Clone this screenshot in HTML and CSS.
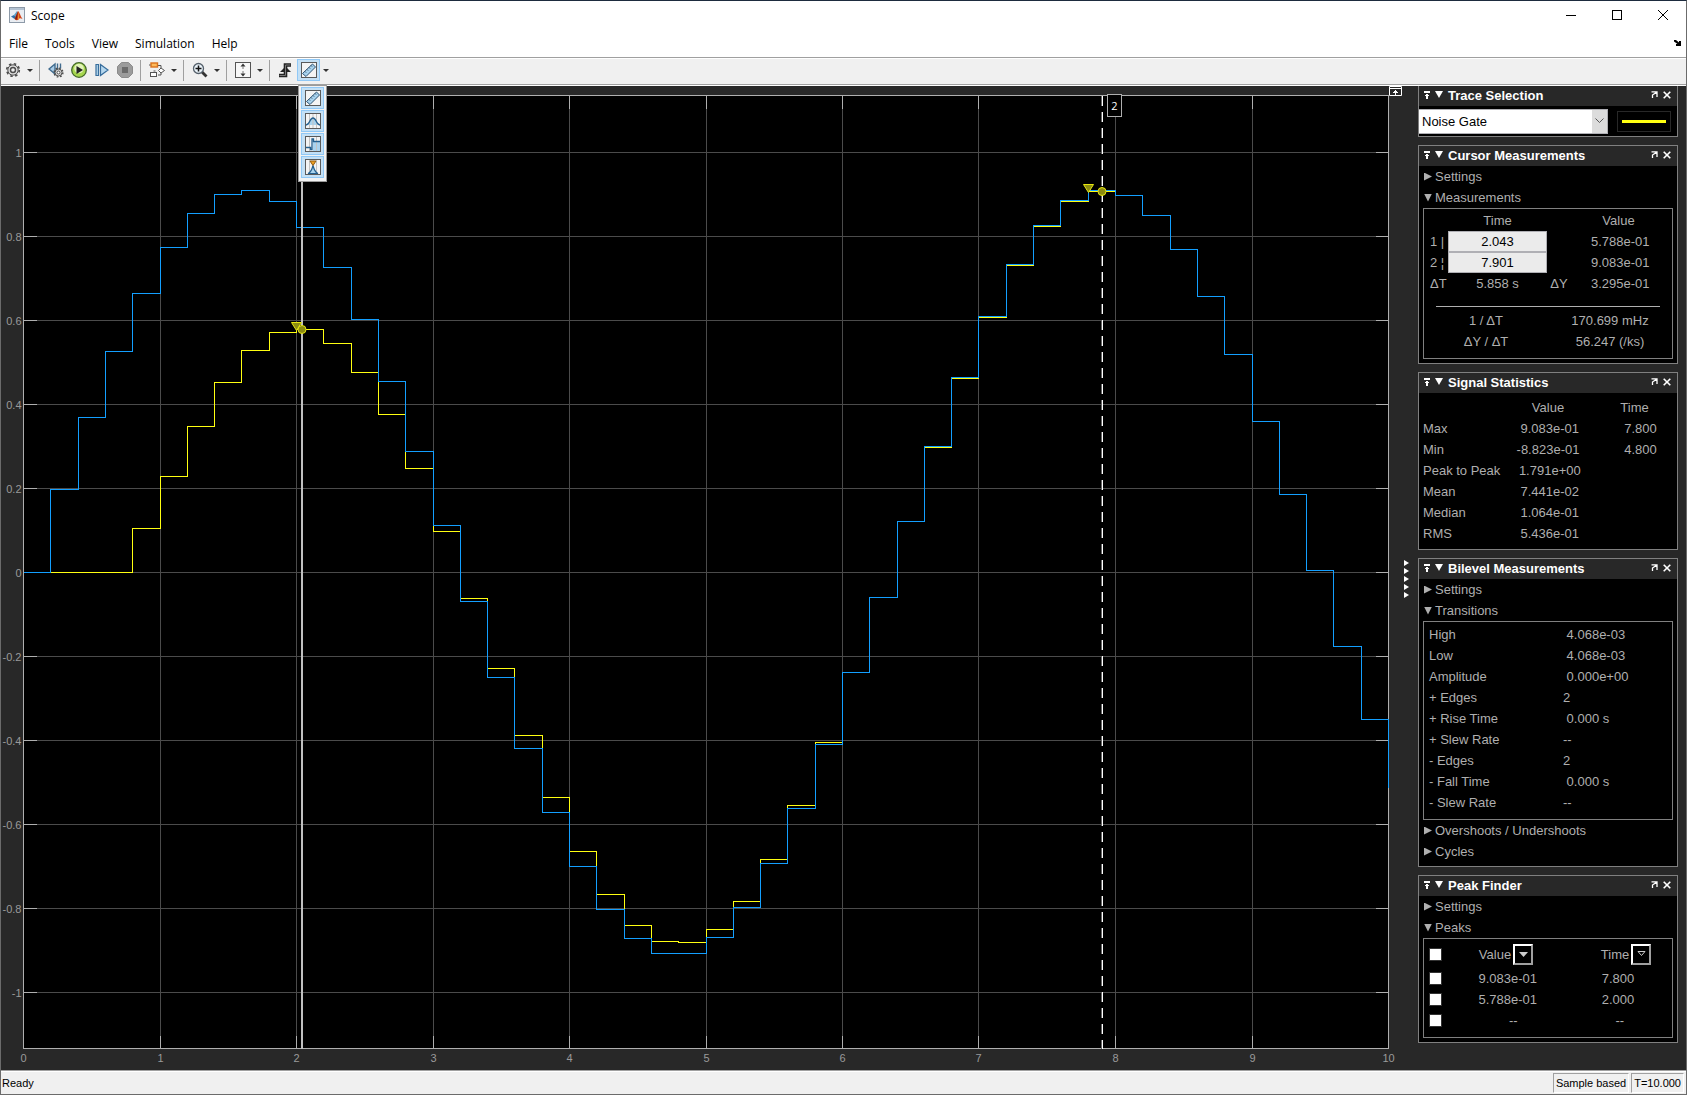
FILE: index.html
```html
<!DOCTYPE html>
<html lang="en">
<head>
    <meta charset="UTF-8">
    <meta name="viewport" content="width=device-width, initial-scale=1.0">
    <title>Scope</title>
    <link rel="stylesheet" href="styles.css">
</head>
<body>
    <!-- shared icons -->
    <svg class="sprite" width="0" height="0">
        <symbol id="pin" viewBox="0 0 6 8"><path d="M0 0h6v2H0zM2 4h2v4H2zM1 4h4v1H1zM2 3h2v1H2z"/></symbol>
        <symbol id="undock" viewBox="0 0 7 7"><path d="M0.500 0.800h5.500v5.200M5.500 1.300L1.500 4v3" fill="none" stroke="currentColor" stroke-width="1.300"/></symbol>
        <symbol id="cross" viewBox="0 0 8 8"><path d="M0.7 0.7l6.600 6.600M7.300 0.7l-6.600 6.600" fill="none" stroke="currentColor" stroke-width="1.600"/></symbol>
        <symbol id="ruler" viewBox="0 0 16 16">
            <rect x="0.5" y="0.5" width="15" height="15" fill="#f4f4f4" stroke="#5a5a5a"/>
            <path d="M1.500 11.500L11.500 2l3 3L5 14.500z" fill="#a9d3ee" stroke="#2c5273"/>
            <path d="M4 9.500l1 1M6 7.500l1 1M8 5.500l1 1M10 3.500l1 1" stroke="#20394f"/>
        </symbol>
    </svg>

    <div class="window">
        <header class="titlebar">
            <svg class="logo" width="16" height="16" viewBox="0 0 16 16">
                <rect x="0.5" y="0.5" width="15" height="15" fill="#e9edf2" stroke="#8d9aa8"/>
                <path d="M1 1h14v2H1z" fill="#b4c3d3"/>
                <path d="M2 9.500l3-1.500 2.500 2-2 2z" fill="#2e6fa8"/>
                <path d="M5 8l3-4 1 3-1.500 3z" fill="#5aa0c8"/>
                <path d="M5.500 12L9 4c1.500 1 2.500 5 4.500 8-2-1-3-1-4 .5-1 1-2.500 1-4-.5z" fill="#d4461c"/>
                <path d="M9 4c-.5 3-.5 6-1.500 9L6 12z" fill="#7d1e12"/>
                <path d="M9 5c1 2 .5 5 1.200 6.500L9 13z" fill="#f2a032"/>
            </svg>
            <h1>Scope</h1>
            <div class="window-buttons">
                <button type="button" aria-label="Minimize"><svg width="10" height="10"><path d="M0 5.500h10" stroke="#000"/></svg></button>
                <button type="button" aria-label="Maximize"><svg width="10" height="10"><rect x="0.5" y="0.5" width="9" height="9" fill="none" stroke="#000"/></svg></button>
                <button type="button" aria-label="Close"><svg width="10" height="10"><path d="M0 0l10 10M10 0L0 10" stroke="#000"/></svg></button>
            </div>
        </header>

        <nav class="menubar">
            <button type="button">File</button>
            <button type="button">Tools</button>
            <button type="button">View</button>
            <button type="button">Simulation</button>
            <button type="button">Help</button>
            <button type="button" class="dock" aria-label="Dock"><svg width="7" height="6" viewBox="0 0 7 6"><path d="M0 0h2l3 2.500V1h2v5H2V4h1.500L0 1.500z"/></svg></button>
        </nav>

        <div class="toolbar">
            <button type="button" class="tool" aria-label="Configuration">
                <svg width="16" height="16" viewBox="0 0 16 16">
                    <circle cx="8" cy="8" r="6.300" fill="none" stroke="#4c4c4c" stroke-width="1.600" stroke-dasharray="2.500 2.450"/>
                    <circle cx="8" cy="8" r="5.200" fill="#dcdcdc" stroke="#4c4c4c"/>
                    <circle cx="8" cy="8" r="2.500" fill="#f0f0f0" stroke="#4c4c4c" stroke-width="1.400"/>
                </svg>
            </button>
            <button type="button" class="more" aria-label="More configuration"></button>
            <span class="sep"></span>
            <button type="button" class="tool" aria-label="Step back">
                <svg width="16" height="16" viewBox="0 0 16 16">
                    <path d="M1 7l6-5v10zM9.500 1.500v6M12.500 1.500v5" fill="#a8cbe6" stroke="#3f6b8f" stroke-width="1.400"/>
                    <circle cx="10.500" cy="10.500" r="4.400" fill="none" stroke="#4c4c4c" stroke-width="1.400" stroke-dasharray="1.700 1.750"/>
                    <circle cx="10.500" cy="10.500" r="3.500" fill="#e0e0e0" stroke="#4c4c4c"/>
                    <circle cx="10.500" cy="10.500" r="1.500" fill="#fff" stroke="#4c4c4c"/>
                </svg>
            </button>
            <button type="button" class="tool" aria-label="Run">
                <svg width="16" height="16" viewBox="0 0 16 16">
                    <circle cx="8" cy="8" r="7.300" fill="#a6d64e" stroke="#44682a" stroke-width="1.300"/>
                    <circle cx="8" cy="6.500" r="4.800" fill="#e1f3b8"/>
                    <path d="M5.500 4v8L12 8z" fill="#222"/>
                </svg>
            </button>
            <button type="button" class="tool" aria-label="Step forward">
                <svg width="16" height="16" viewBox="0 0 16 16">
                    <path d="M2 2.500h2.500v11H2zM6.500 2.500L14 8l-7.500 5.500z" fill="#b5d7ee" stroke="#376d9c" stroke-width="1.200"/>
                </svg>
            </button>
            <button type="button" class="tool" aria-label="Stop">
                <svg width="16" height="16" viewBox="0 0 16 16">
                    <path d="M4.500 0.500h7l4 4v7l-4 4h-7l-4-4v-7z" fill="#9b9b9b" stroke="#8b8b8b"/>
                    <rect x="5" y="5" width="6" height="6" fill="#6a6a6a"/>
                </svg>
            </button>
            <span class="sep"></span>
            <button type="button" class="tool" aria-label="Highlight block">
                <svg width="16" height="16" viewBox="0 0 16 16">
                    <path d="M9 3.500h3v3M9 13h3v-2.500M4.500 9h2" fill="none" stroke="#555"/>
                    <rect x="2" y="1" width="6.500" height="4" fill="#fdba5b" stroke="#d9711c" stroke-width="1.400"/>
                    <path d="M0 3h1.500" stroke="#555"/>
                    <path d="M9.500 8.500L12 6l3.500 2.500L12 11z" fill="#fff" stroke="#555"/>
                    <rect x="1.500" y="10.500" width="6" height="4" fill="#fff" stroke="#555"/>
                </svg>
            </button>
            <button type="button" class="more" aria-label="More blocks"></button>
            <span class="sep"></span>
            <button type="button" class="tool" aria-label="Zoom in">
                <svg width="16" height="16" viewBox="0 0 16 16">
                    <path d="M10 10l4.500 4.500" stroke="#333" stroke-width="2.800"/>
                    <circle cx="6.500" cy="6.500" r="5" fill="#e9f2f8" stroke="#55606b" stroke-width="1.300"/>
                    <path d="M6.500 3.500v6M3.500 6.500h6" stroke="#111" stroke-width="1.500"/>
                </svg>
            </button>
            <button type="button" class="more" aria-label="More zoom"></button>
            <span class="sep"></span>
            <button type="button" class="tool" aria-label="Scale axes">
                <svg width="16" height="16" viewBox="0 0 16 16">
                    <rect x="0.5" y="0.5" width="15" height="15" fill="#f7f7f7" stroke="#555"/>
                    <path d="M8 1.500L10.500 4.500H5.500zM8 14.500L10.500 11.500H5.500z" fill="#333"/>
                    <path d="M8 4v3M8 9v3" stroke="#777"/>
                </svg>
            </button>
            <button type="button" class="more" aria-label="More scaling"></button>
            <span class="sep"></span>
            <button type="button" class="tool" aria-label="Triggers">
                <svg width="16" height="16" viewBox="0 0 16 16">
                    <path d="M1 13.500h6.500V3H13" fill="none" stroke="#222" stroke-width="3.600"/>
                    <path d="M2 10L7.500 4.500l5.500 5.500z" fill="#222"/>
                    <path d="M1.500 13.500h6V3H12.500" fill="none" stroke="#777"/>
                </svg>
            </button>
            <div class="measure">
                <button type="button" class="tool active" aria-label="Cursor measurements"><svg width="16" height="16"><use href="#ruler"/></svg></button>
                <div class="measure-menu">
                    <button type="button" aria-label="Cursor measurements"><svg width="16" height="16"><use href="#ruler"/></svg></button>
                    <button type="button" aria-label="Signal statistics">
                        <svg width="16" height="16" viewBox="0 0 16 16">
                            <rect x="0.5" y="0.5" width="15" height="15" fill="#f4f4f4" stroke="#5a5a5a"/>
                            <path d="M1 12c4 0 3.500-7 7-7s3 7 7 7z" fill="#a9d3ee"/>
                            <path d="M4.500 1v14M11.500 1v14M8 1v14" stroke="#c3c3c3"/>
                            <path d="M1 12c4 0 3.500-7 7-7s3 7 7 7" fill="none" stroke="#24608f" stroke-width="1.300"/>
                        </svg>
                    </button>
                    <button type="button" aria-label="Bilevel measurements">
                        <svg width="16" height="16" viewBox="0 0 16 16">
                            <rect x="0.5" y="0.5" width="15" height="15" fill="#f4f4f4" stroke="#5a5a5a"/>
                            <path d="M8 5h7v10H8z" fill="#a9d3ee"/>
                            <path d="M4.500 1v14M11.500 1v14" stroke="#c3c3c3"/>
                            <path d="M1 11.500h4.500v2h1.500V3h1.500v2.500H15" fill="none" stroke="#24608f" stroke-width="1.300"/>
                        </svg>
                    </button>
                    <button type="button" aria-label="Peak finder">
                        <svg width="16" height="16" viewBox="0 0 16 16">
                            <rect x="0.5" y="0.5" width="15" height="15" fill="#f4f4f4" stroke="#5a5a5a"/>
                            <path d="M4.500 1v14M11.500 1v14" stroke="#c3c3c3"/>
                            <path d="M3 14.500c3-1 4-4 5-8 1 4 2 7 5 8z" fill="#a9d3ee" stroke="#24608f" stroke-width="1.200"/>
                            <path d="M5 2h6L8 6.500z" fill="#f0a020" stroke="#8f5a10"/>
                        </svg>
                    </button>
                </div>
            </div>
            <button type="button" class="more" aria-label="More measurements"></button>
        </div>

        <main class="content">
            <section class="display">
                <svg id="plot" class="plot" role="img" aria-label="Noise Gate signal"></svg>
                <button type="button" class="expand" aria-label="Maximize axes"><svg width="13" height="10" viewBox="0 0 13 10"><path d="M0.500 0.500h12v9H0.500zM1 2.500h11" fill="none" stroke="#fff"/><path d="M6 4h1v1h1v1h1v1H7v2H6V7H4V6h1V5h1z" fill="#fff"/></svg></button>
            </section>

            <button type="button" class="splitter" aria-label="Hide panels">
                <i></i><i></i><i></i><i></i><i></i>
            </button>

            <aside class="panels">
                <section class="panel first">
                    <h2 class="panel-head">
                        <button type="button" aria-label="Pin"><svg width="6" height="8"><use href="#pin"/></svg></button>
                        <button type="button" class="fold" aria-label="Collapse"></button>
                        <span>Trace Selection</span>
                        <button type="button" aria-label="Undock"><svg width="7" height="7"><use href="#undock"/></svg></button>
                        <button type="button" aria-label="Close"><svg width="8" height="8"><use href="#cross"/></svg></button>
                    </h2>
                    <div class="trace">
                        <div class="trace-select">
                            <select aria-label="Trace">
                                <option>Noise Gate</option>
                            </select>
                            <span><svg width="9" height="6" viewBox="0 0 9 6"><path d="M0.500 0.500l4 4 4-4" fill="none" stroke="#555"/></svg></span>
                        </div>
                        <div class="trace-line"></div>
                    </div>
                </section>

                <section class="panel">
                    <h2 class="panel-head">
                        <button type="button" aria-label="Pin"><svg width="6" height="8"><use href="#pin"/></svg></button>
                        <button type="button" class="fold" aria-label="Collapse"></button>
                        <span>Cursor Measurements</span>
                        <button type="button" aria-label="Undock"><svg width="7" height="7"><use href="#undock"/></svg></button>
                        <button type="button" aria-label="Close"><svg width="8" height="8"><use href="#cross"/></svg></button>
                    </h2>
                    <details><summary>Settings</summary></details>
                    <details open class="last">
                        <summary>Measurements</summary>
                        <div class="box">
                            <table class="cursors">
                                <tr><th></th><th>Time</th><th></th><th>Value</th></tr>
                                <tr><td><label for="cursor1">1 |</label></td><td><input type="text" id="cursor1" value="2.043"></td><td></td><td>&nbsp;5.788e-01</td></tr>
                                <tr><td><label for="cursor2">2 ¦</label></td><td><input type="text" id="cursor2" value="7.901"></td><td></td><td>&nbsp;9.083e-01</td></tr>
                                <tr><td>ΔT</td><td>5.858 s</td><td>ΔY</td><td>&nbsp;3.295e-01</td></tr>
                            </table>
                            <hr>
                            <table class="rates">
                                <tr><td>1 / ΔT</td><td>170.699 mHz</td></tr>
                                <tr><td>ΔY / ΔT</td><td>56.247 (/ks)</td></tr>
                            </table>
                        </div>
                    </details>
                </section>

                <section class="panel">
                    <h2 class="panel-head">
                        <button type="button" aria-label="Pin"><svg width="6" height="8"><use href="#pin"/></svg></button>
                        <button type="button" class="fold" aria-label="Collapse"></button>
                        <span>Signal Statistics</span>
                        <button type="button" aria-label="Undock"><svg width="7" height="7"><use href="#undock"/></svg></button>
                        <button type="button" aria-label="Close"><svg width="8" height="8"><use href="#cross"/></svg></button>
                    </h2>
                    <table class="stats">
                        <tr><th></th><th>Value</th><th>Time</th></tr>
                        <tr><td>Max</td><td>&nbsp;9.083e-01</td><td>7.800</td></tr>
                        <tr><td>Min</td><td>-8.823e-01</td><td>4.800</td></tr>
                        <tr><td>Peak to Peak</td><td>&nbsp;1.791e+00</td><td></td></tr>
                        <tr><td>Mean</td><td>&nbsp;7.441e-02</td><td></td></tr>
                        <tr><td>Median</td><td>&nbsp;1.064e-01</td><td></td></tr>
                        <tr><td>RMS</td><td>&nbsp;5.436e-01</td><td></td></tr>
                    </table>
                </section>

                <section class="panel">
                    <h2 class="panel-head">
                        <button type="button" aria-label="Pin"><svg width="6" height="8"><use href="#pin"/></svg></button>
                        <button type="button" class="fold" aria-label="Collapse"></button>
                        <span>Bilevel Measurements</span>
                        <button type="button" aria-label="Undock"><svg width="7" height="7"><use href="#undock"/></svg></button>
                        <button type="button" aria-label="Close"><svg width="8" height="8"><use href="#cross"/></svg></button>
                    </h2>
                    <details><summary>Settings</summary></details>
                    <details open>
                        <summary>Transitions</summary>
                        <div class="box list">
                            <table class="transitions">
                                <tr><td>High</td><td>&nbsp;4.068e-03</td></tr>
                                <tr><td>Low</td><td>&nbsp;4.068e-03</td></tr>
                                <tr><td>Amplitude</td><td>&nbsp;0.000e+00</td></tr>
                                <tr><td>+ Edges</td><td>2</td></tr>
                                <tr><td>+ Rise Time</td><td>&nbsp;0.000 s</td></tr>
                                <tr><td>+ Slew Rate</td><td>--</td></tr>
                                <tr><td>- Edges</td><td>2</td></tr>
                                <tr><td>- Fall Time</td><td>&nbsp;0.000 s</td></tr>
                                <tr><td>- Slew Rate</td><td>--</td></tr>
                            </table>
                        </div>
                    </details>
                    <details><summary>Overshoots / Undershoots</summary></details>
                    <details class="last"><summary>Cycles</summary></details>
                </section>

                <section class="panel">
                    <h2 class="panel-head">
                        <button type="button" aria-label="Pin"><svg width="6" height="8"><use href="#pin"/></svg></button>
                        <button type="button" class="fold" aria-label="Collapse"></button>
                        <span>Peak Finder</span>
                        <button type="button" aria-label="Undock"><svg width="7" height="7"><use href="#undock"/></svg></button>
                        <button type="button" aria-label="Close"><svg width="8" height="8"><use href="#cross"/></svg></button>
                    </h2>
                    <details><summary>Settings</summary></details>
                    <details open class="last">
                        <summary>Peaks</summary>
                        <div class="box">
                            <table class="peaks">
                                <tr>
                                    <th><input type="checkbox" aria-label="All peaks"></th>
                                    <th><div class="sort">Value<button type="button" aria-label="Sort by value"><svg width="9" height="5"><path d="M0 0h9L4.500 5z" fill="#ccc"/></svg></button></div></th>
                                    <th><div class="sort">Time<button type="button" aria-label="Sort by time"><svg width="9" height="6"><path d="M1 0.500h7L4.500 4.500z" fill="none" stroke="#ccc"/></svg></button></div></th>
                                </tr>
                                <tr><td><input type="checkbox" aria-label="Peak 1"></td><td>&nbsp;9.083e-01</td><td>7.800</td></tr>
                                <tr><td><input type="checkbox" aria-label="Peak 2"></td><td>&nbsp;5.788e-01</td><td>2.000</td></tr>
                                <tr><td><input type="checkbox" aria-label="Peak 3"></td><td>&nbsp;&nbsp;&nbsp;&nbsp;--</td><td>&nbsp;--</td></tr>
                            </table>
                        </div>
                    </details>
                </section>
            </aside>
        </main>

        <footer class="statusbar">
            <span class="ready">Ready</span>
            <span class="cell">Sample based</span>
            <span class="cell">T=10.000</span>
        </footer>
    </div>
    <script src="script.js"></script>
</body>
</html>
```

FILE: styles.css
```css
*, *::before {
    box-sizing: border-box;
    padding: 0;
    margin: 0;
}
body {
    font-family: "Liberation Sans", Arial, sans-serif;
    font-size: 13px;
    background: #282828;
}
button {
    border: none;
    background: none;
    color: inherit;
    font: inherit;
}
svg {
    display: block;
}
.sprite {
    position: absolute;
}
.window {
    display: flex;
    flex-direction: column;
    min-height: 100vh;
    border: 1px solid #6b6b6b;
    border-top-color: #1d2b3e;
}

/* title and menus */
.titlebar {
    display: flex;
    align-items: center;
    height: 28px;
    padding-left: 8px;
    gap: 6px;
    background: #fff;
}
.titlebar h1, .menubar {
    font-family: "Open Sans", "Noto Sans", sans-serif;
    font-size: 12px;
    font-weight: 400;
    color: #000;
}
.window-buttons {
    display: flex;
    margin-left: auto;
}
.window-buttons button {
    display: flex;
    justify-content: center;
    align-items: center;
    width: 46px;
    height: 28px;
}
.menubar {
    display: flex;
    align-items: center;
    height: 28px;
    padding: 0 5px 0 8px;
    gap: 17px;
    background: #fff;
}
.menubar .dock {
    margin-left: auto;
}

/* toolbar */
.toolbar {
    display: flex;
    height: 29px;
    padding-top: 1px;
    background: #f0f0f0;
    border-top: 1px solid #a0a0a0;
    border-bottom: 1px solid #fff;
    box-shadow: inset 0 1px #fff, inset 0 -1px #a0a0a0;
}
.tool {
    display: flex;
    justify-content: center;
    align-items: center;
    width: 23px;
    height: 22px;
}
.more {
    width: 11px;
    height: 22px;
}
.more::before {
    content: "";
    display: block;
    margin: 0 auto;
    width: 6px;
    border: solid transparent;
    border-width: 3px 3px 0;
    border-top-color: #333;
}
.sep {
    width: 1px;
    height: 21px;
    margin: 1px 4px 0;
    background: #a0a0a0;
}
.active, .measure-menu button {
    background: #c4e0f5;
    border: 1px solid #90c8f6;
}
.measure {
    position: relative;
}
.measure-menu {
    position: absolute;
    z-index: 2;
    top: 26px;
    left: 1px;
    display: grid;
    gap: 1px;
    padding: 1px 2px 3px;
    background: #f2f2f2;
    border: 1px solid #9a9a9a;
}
.measure-menu button {
    display: flex;
    justify-content: center;
    align-items: center;
    width: 23px;
    height: 22px;
}

/* plot */
.content {
    display: flex;
    flex: 1;
    padding-right: 8px;
    background: #282828;
}
.display {
    position: relative;
    flex: 1;
    min-width: 0;
}
.plot {
    position: absolute;
    width: 100%;
    height: 100%;
    shape-rendering: crispEdges;
}
.plot text {
    font-size: 11px;
    fill: #9a9a9a;
}
.axis {
    fill: none;
    stroke: #afafaf;
}
.area {
    fill: #000;
}
.grid {
    stroke: #4b4b4b;
}
.trace-gate {
    fill: none;
    stroke: #ffff11;
}
.trace-input {
    fill: none;
    stroke: #139fff;
}
.cursor {
    stroke: #c0c0c0;
    stroke-width: 2;
}
.cursor-dim {
    stroke: #666;
    stroke-dasharray: 10 6;
}
.cursor-dash {
    stroke: #fff;
    stroke-dasharray: 10 6;
}
.marker {
    fill: #8c8c11;
    stroke: #e6e611;
    shape-rendering: auto;
}
.tag {
    fill: #000;
    stroke: #afafaf;
    stroke-width: 1;
}
.plot .tag-text {
    fill: #fff;
    font-family: "Open Sans", sans-serif;
}
.expand {
    position: absolute;
    top: 0;
    right: 0;
}
.splitter {
    display: flex;
    flex-direction: column;
    justify-content: center;
    gap: 2px;
    width: 16px;
    padding: 2px 0 0 2px;
}
.splitter i {
    border: solid transparent;
    border-width: 3px 0 3px 5px;
    border-left-color: #fff;
}

/* measurement panels */
.panels {
    width: 260px;
    display: flex;
    flex-direction: column;
    gap: 8px;
    padding-bottom: 20px;
    color: #afafaf;
}
.panel {
    background: #000;
    border: 1px solid #808080;
}
.first {
    border-top: none;
}
.panel-head {
    display: flex;
    align-items: center;
    gap: 5px;
    height: 20px;
    padding: 0 6px 2px 5px;
    background: #282828;
    color: #fff;
    font-size: 13px;
}
.panel-head svg {
    fill: #fff;
    margin-bottom: 1px;
}
.panel-head span {
    flex: 1;
}
.fold {
    width: 8px;
    border: solid transparent;
    border-width: 7px 4px 0;
    border-top-color: #fff;
    margin-bottom: 1px;
}
.trace {
    display: flex;
    align-items: center;
    justify-content: space-between;
    height: 30px;
    padding-right: 6px;
}
.trace-select {
    position: relative;
    width: 189px;
}
.trace-select select {
    appearance: none;
    display: block;
    width: 100%;
    height: 25px;
    padding-left: 3px;
    border: 1px solid #afafb4;
    border-left: none;
    border-radius: 0;
    background: #fff;
    color: #000;
    font: inherit;
}
.trace-select span {
    position: absolute;
    top: 1px;
    right: 1px;
    display: flex;
    justify-content: center;
    align-items: center;
    width: 15px;
    height: 23px;
    background: #dcdcdc;
    pointer-events: none;
}
.trace-line {
    width: 54px;
    height: 21px;
    padding: 8px 4px;
    border: 1px solid #282828;
}
.trace-line::before {
    content: "";
    display: block;
    height: 3px;
    background: #ffff11;
}
summary {
    display: flex;
    align-items: center;
    gap: 3px;
    height: 21px;
    padding-left: 5px;
    list-style: none;
}
summary::before {
    content: "";
    width: 8px;
    height: 8px;
    background: #afafaf;
    clip-path: polygon(0 0, 100% 50%, 0 100%);
}
details[open] summary::before {
    clip-path: polygon(0 0, 100% 0, 50% 100%);
}
.box {
    margin: 0 4px;
    padding: 1px 0 6px;
    border: 1px solid #808080;
}
.list {
    padding-top: 2px;
}
.last {
    padding-bottom: 4px;
}
table {
    width: 100%;
    table-layout: fixed;
    border-collapse: collapse;
    line-height: 21px;
}
th {
    font-weight: 400;
}
td, th {
    height: 21px;
    white-space: nowrap;
    text-align: center;
}
td:first-child {
    text-align: left;
}
.cursors td:first-child {
    padding-left: 6px;
}
.cursors th:first-child {
    width: 24px;
}
.cursors th:nth-child(2) {
    width: 99px;
}
.cursors th:nth-child(3) {
    width: 24px;
}
.cursors td:last-child, .cursors th:last-child {
    padding-right: 6px;
}
.cursors input {
    display: block;
    width: 99px;
    height: 21px;
    border: 1px solid #afafb4;
    background: #ebebeb;
    color: #000;
    font: inherit;
    text-align: center;
}
hr {
    margin: 12px 12px 3px;
    border: none;
    border-top: 1px solid #afafaf;
}
.rates td, .rates td:first-child {
    text-align: center;
}
.stats {
    margin: 4px 0 5px;
}
.stats td:first-child {
    padding-left: 4px;
}
.stats th:nth-child(2) {
    width: 88px;
}
.stats th:nth-child(3) {
    width: 85px;
}
.stats td:nth-child(3) {
    padding-left: 12px;
}
.transitions td {
    width: 109px;
    text-align: left;
}
.transitions td:first-child {
    width: 139px;
    padding-left: 5px;
}
.peaks th {
    height: 28px;
}
.peaks th:first-child {
    width: 28px;
}
.peaks th:nth-child(2) {
    width: 108px;
}
.peaks td:nth-child(3) {
    padding-left: 4px;
}
.peaks th:nth-child(3) {
    padding-left: 20px;
}
.peaks input {
    appearance: none;
    display: block;
    width: 13px;
    height: 13px;
    margin: 0 auto 0 5px;
    border: 1px solid #333;
    background: #fff;
}
.sort {
    display: flex;
    justify-content: center;
    align-items: center;
    gap: 2px;
}
.sort button {
    display: flex;
    justify-content: center;
    align-items: center;
    width: 20px;
    height: 21px;
    border: 2px solid;
    border-color: #fff #a0a0a0 #a0a0a0 #fff;
}

/* status bar */
.statusbar {
    display: flex;
    align-items: center;
    gap: 2px;
    height: 24px;
    padding-right: 2px;
    background: #f0f0f0;
    border-top: 1px solid #a0a0a0;
    box-shadow: inset 0 1px #fff;
    color: #000;
    font-size: 11px;
}
.ready {
    flex: 1;
    padding-left: 1px;
}
.cell {
    padding: 0 2px;
    line-height: 18px;
    border: 1px solid;
    border-color: #a0a0a0 #fff #fff #a0a0a0;
}
```

FILE: script.js
```js
// samples every 0.2 s, held until the next one
const step = 0.2;
const input = [
    0, 0.198, 0.369, 0.526, 0.664, 0.774, 0.855, 0.9, 0.91, 0.883,
    0.821, 0.726, 0.602, 0.455, 0.288, 0.112, -0.069, -0.25, -0.419, -0.571,
    -0.7, -0.802, -0.871, -0.907, -0.907, -0.869, -0.798, -0.693, -0.562, -0.41,
    -0.238, -0.06, 0.121, 0.3, 0.465, 0.61, 0.734, 0.826, 0.886, 0.91,
    0.898, 0.85, 0.769, 0.657, 0.519, 0.36, 0.186, 0.005, -0.176, -0.35, -0.512
];
const gate = [
    0, 0, 0, 0, 0.105, 0.229, 0.348, 0.452, 0.529, 0.571,
    0.579, 0.545, 0.476, 0.376, 0.248, 0.098, -0.062, -0.229, -0.388, -0.536,
    -0.664, -0.767, -0.84, -0.879, -0.882, -0.85, -0.783, -0.683, -0.555, -0.405,
    -0.238, -0.06, 0.121, 0.298, 0.462, 0.607, 0.731, 0.824, 0.883, 0.907,
    0.898, 0.85, 0.769, 0.657, 0.519, 0.36, 0.186, 0.005, -0.176, -0.35, -0.512
];

const plot = document.getElementById('plot');
const margin = { top: 9, right: 14, bottom: 22, left: 22 };
const yMax = 1.1357;
const yMin = -1.1333;

function draw() {
    const width = plot.clientWidth - margin.left - margin.right;
    const height = plot.clientHeight - margin.top - margin.bottom;
    const x = t => Math.round(margin.left + t / 10 * width) + 0.5;
    const y = v => Math.round(margin.top + (yMax - v) / (yMax - yMin) * height) + 0.5;
    const top = y(yMax), bottom = y(yMin), left = x(0), right = x(10);
    const line = (cls, x1, y1, x2, y2) => `<line class="${cls}" x1="${x1}" y1="${y1}" x2="${x2}" y2="${y2}"/>`;

    const stairs = (cls, data) => {
        let d = `M${x(0)} ${y(data[0])}`;
        for (let i = 1; i < data.length; i++) {
            d += `H${x(i * step)}V${y(data[i])}`;
        }
        return `<path class="${cls}" d="${d}"/>`;
    };
    const peak = (t, v) => `<path class="marker" d="M${x(t) - 5} ${y(v) - 7}h10l-5 8z"/>`;
    const dot = (cx, v) => `<circle class="marker" cx="${cx}" cy="${y(v)}" r="4"/>`;

    let out = `<rect class="area" x="${left}" y="${top}" width="${right - left}" height="${bottom - top}"/>`;
    let ticks = '';
    for (let i = 0; i <= 10; i++) {
        if (i > 0 && i < 10) {
            out += line('grid', x(i), top, x(i), bottom);
            ticks += line('axis', x(i), top, x(i), top + 13) + line('axis', x(i), bottom - 13, x(i), bottom);
        }
        out += `<text x="${x(i)}" y="${bottom + 13}" text-anchor="middle">${i}</text>`;
    }
    for (let i = -5; i <= 5; i++) {
        const v = i / 5;
        out += line('grid', left, y(v), right, y(v));
        ticks += line('axis', left, y(v), left + 13, y(v)) + line('axis', right - 13, y(v), right, y(v));
        out += `<text x="${left - 2}" y="${y(v) + 4}" text-anchor="end">${v}</text>`;
    }
    out += ticks + `<rect class="axis" x="${left}" y="${top}" width="${right - left}" height="${bottom - top}"/>`;
    out += stairs('trace-gate', gate) + stairs('trace-input', input);

    // cursors straddle two pixel columns
    const c1 = Math.round(left + 0.2043 * width), c2 = Math.round(left + 0.7901 * width);
    out += line('cursor', c1, top, c1, bottom);
    out += line('cursor-dim', c2 - 0.5, top, c2 - 0.5, bottom) + line('cursor-dash', c2 + 0.5, top, c2 + 0.5, bottom);
    out += peak(2, 0.579) + dot(c1, 0.579) + peak(7.8, 0.908) + dot(c2, 0.908);
    out += `<rect class="tag" x="${c2 + 5.5}" y="${top - 1}" width="14" height="22"/>`;
    out += `<text class="tag-text" x="${c2 + 12.5}" y="${top + 14}" text-anchor="middle">2</text>`;
    plot.innerHTML = out;
}

draw();
window.addEventListener('resize', draw);
```
